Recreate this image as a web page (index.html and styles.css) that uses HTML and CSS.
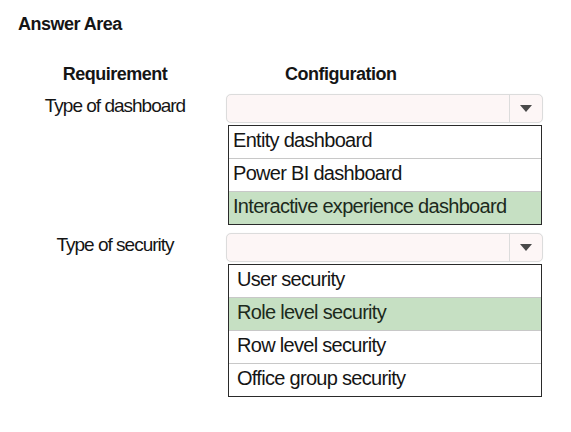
FILE: index.html
```html
<!DOCTYPE html>
<html>
<head>
<meta charset="utf-8">
<link rel="stylesheet" href="styles.css">
</head>
<body>
<div class="page">
  <div class="title">Answer Area</div>
  <div class="grid">
    <div class="head head-req">Requirement</div>
    <div class="head head-conf">Configuration</div>

    <div class="label">Type of dashboard</div>
    <div class="field">
      <div class="select">
        <div class="select-value"></div>
        <div class="select-btn"><span class="tri"></span></div>
      </div>
      <div class="list list-a">
        <div class="opt">Entity dashboard</div>
        <div class="opt">Power BI dashboard</div>
        <div class="opt sel">Interactive experience dashboard</div>
      </div>
    </div>

    <div class="label">Type of security</div>
    <div class="field">
      <div class="select">
        <div class="select-value"></div>
        <div class="select-btn"><span class="tri"></span></div>
      </div>
      <div class="list list-b">
        <div class="opt">User security</div>
        <div class="opt sel">Role level security</div>
        <div class="opt">Row level security</div>
        <div class="opt">Office group security</div>
      </div>
    </div>
  </div>
</div>
</body>
</html>
```

FILE: styles.css
```css
html, body {
  margin: 0;
  padding: 0;
  background: #ffffff;
}
body {
  font-family: "Liberation Sans", Arial, sans-serif;
  color: #151515;
  width: 571px;
  height: 432px;
  overflow: hidden;
}
.page {
  padding: 14px 0 0 18px;
}
.title {
  font-weight: bold;
  font-size: 18px;
  line-height: 20px;
  letter-spacing: -0.5px;
}
.grid {
  margin-top: 30px;
  display: grid;
  grid-template-columns: 194px 317px;
  column-gap: 14px;
  align-items: start;
}
.head {
  font-weight: bold;
  font-size: 18px;
  line-height: 20px;
  letter-spacing: -0.5px;
  margin-bottom: 10px;
}
.head-req {
  text-align: center;
}
.head-conf {
  padding-left: 59px;
}
.label {
  font-size: 19px;
  line-height: 24px;
  letter-spacing: -1px;
  text-align: center;
  white-space: nowrap;
}
.field {
  display: flex;
  flex-direction: column;
  margin-bottom: 8px;
}
.select {
  display: flex;
  height: 27px;
  border: 1px solid #dcdcdc;
  border-radius: 5px;
  background: #fdf6f6;
  box-shadow: 0 0 1px rgba(0,0,0,0.08);
}
.select-value {
  flex: 1;
}
.select-btn {
  width: 32px;
  border-left: 1px solid #dcdcdc;
  display: flex;
  align-items: center;
  justify-content: center;
}
.tri {
  width: 0;
  height: 0;
  border-left: 6px solid transparent;
  border-right: 6px solid transparent;
  border-top: 7px solid #4a4a4a;
}
.list {
  margin: 2px 1px 0 2px;
  border: 1px solid #2a2a2a;
  background: #ffffff;
}
.opt {
  font-size: 20px;
  line-height: 28px;
  height: 28px;
  padding-bottom: 4px;
  letter-spacing: -0.7px;
  border-bottom: 1px solid #c8c8c8;
  white-space: nowrap;
}
.opt:last-child {
  border-bottom: none;
}
.list-a .opt {
  padding-left: 4px;
}
.list-b .opt {
  padding-left: 8px;
}
.opt.sel {
  background: #c6e0c3;
  color: #1c2a1c;
}
```
